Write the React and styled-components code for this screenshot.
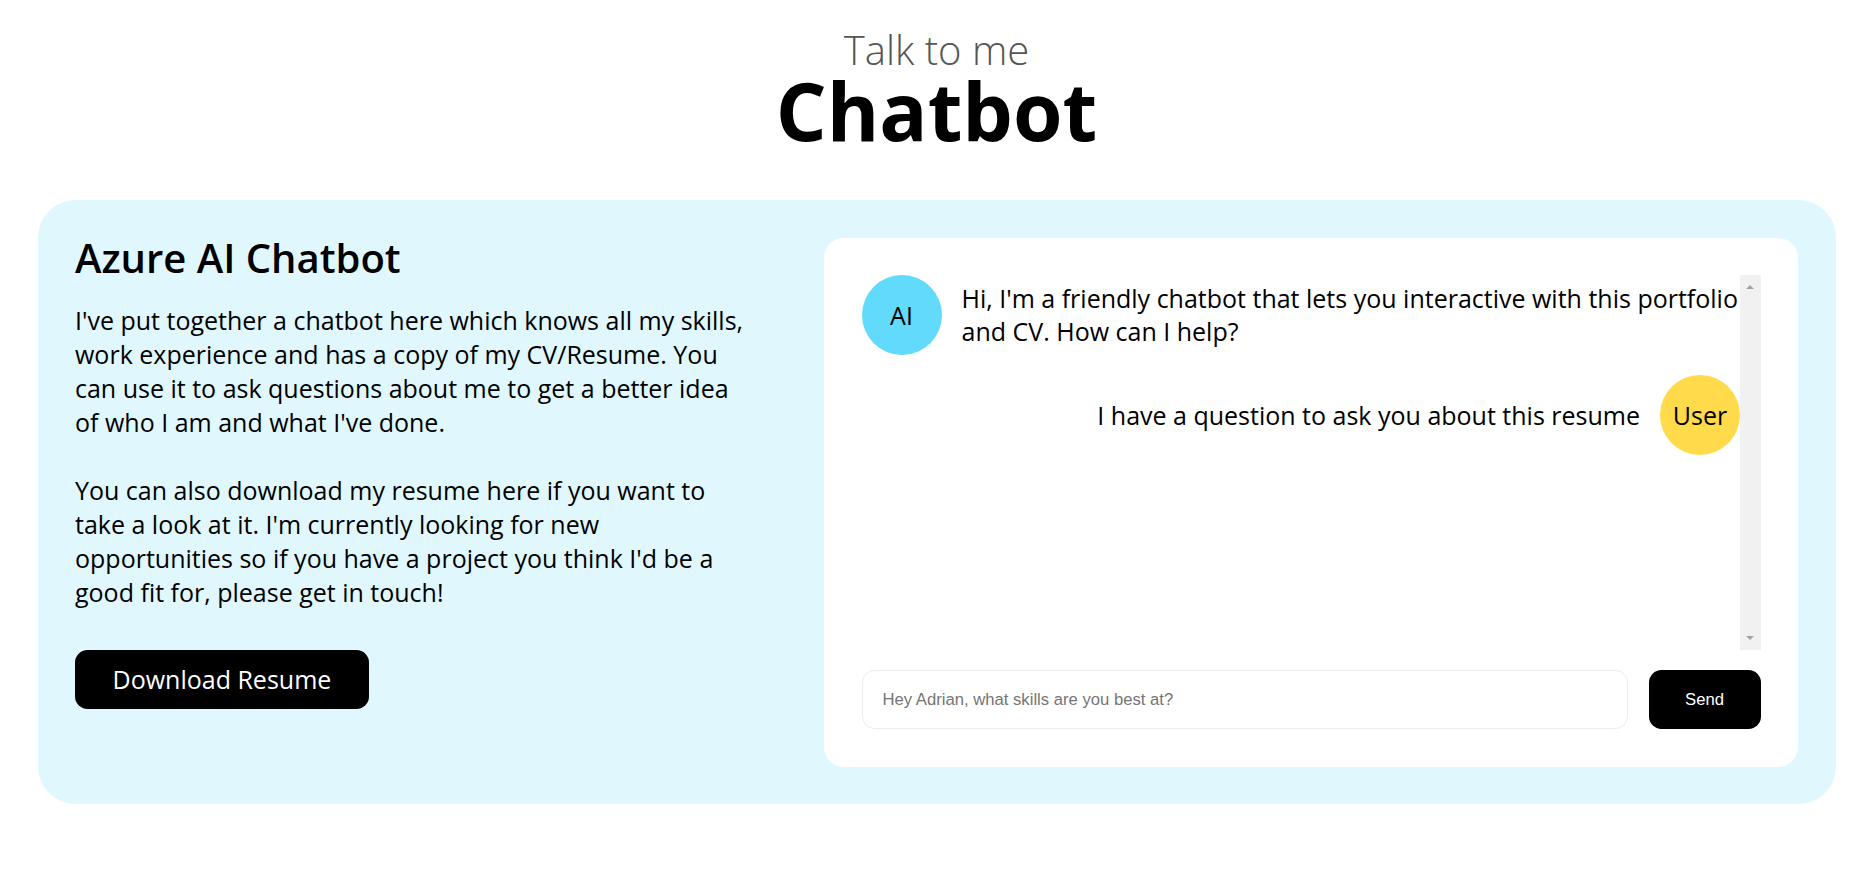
import React from "react";
import styled, { createGlobalStyle } from "styled-components";

const GlobalStyle = createGlobalStyle`
  html, body {
    margin: 0;
    padding: 0;
    background: #ffffff;
    font-family: "Open Sans", "Noto Sans", sans-serif;
    color: #000;
  }
  * { box-sizing: border-box; }
`;

const Page = styled.main`
  padding: 30px 0 60px;
`;

const Header = styled.header`
  display: flex;
  flex-direction: column;
  align-items: center;
  margin-bottom: 50px;
`;

const Eyebrow = styled.h3`
  margin: 0;
  font-size: 40px;
  line-height: 40px;
  font-weight: 300;
  color: #555;
`;

const Title = styled.h1`
  margin: 0;
  font-size: 80px;
  line-height: 80px;
  font-weight: 700;
  color: #000;
`;

const Panel = styled.section`
  display: grid;
  grid-template-columns: 749px 1fr;
  align-items: start;
  margin: 0 37.5px;
  padding: 37.5px;
  background: #e0f7fd;
  border-radius: 37.5px;
`;

const Intro = styled.div`
  display: flex;
  flex-direction: column;
  align-items: flex-start;
  padding-right: 73px;
`;

const IntroTitle = styled.h2`
  margin: 0 0 25.5px;
  font-size: 40px;
  line-height: 40px;
  font-weight: 600;
`;

const IntroText = styled.p`
  margin: 0 0 34px;
  font-size: 25px;
  line-height: 34px;
  &:last-of-type { margin-bottom: 40.5px; }
`;

const PrimaryButton = styled.button`
  height: 59px;
  padding: 0 37.5px;
  border: none;
  border-radius: 12.5px;
  background: #000;
  color: #fff;
  font-family: "Open Sans", sans-serif;
  font-size: 25px;
  cursor: pointer;
`;

const ChatCard = styled.div`
  display: flex;
  flex-direction: column;
  gap: 20px;
  padding: 37.5px;
  background: #fff;
  border-radius: 20px;
`;

const ChatBody = styled.div`
  display: flex;
  height: 375px;
`;

const MessageList = styled.div`
  flex: 1;
  min-width: 0;
  overflow-y: auto;
  display: flex;
  flex-direction: column;
  gap: 20px;
  scrollbar-width: none;
`;

const ScrollRail = styled.div`
  flex: 0 0 20.5px;
  display: flex;
  flex-direction: column;
  align-items: center;
  justify-content: space-between;
  padding: 10px 0;
  background: #f1f1f1;
`;

const RailArrow = styled.span`
  width: 0;
  height: 0;
  border-left: 4.5px solid transparent;
  border-right: 4.5px solid transparent;
  ${(p) =>
    p.$dir === "up"
      ? "border-bottom: 4.5px solid #a3a3a3;"
      : "border-top: 4.5px solid #a3a3a3;"}
`;

const MessageRow = styled.div`
  display: flex;
  align-items: center;
  gap: 20px;
  justify-content: ${(p) => (p.$from === "user" ? "flex-end" : "flex-start")};
`;

const Avatar = styled.div`
  flex: 0 0 80px;
  width: 80px;
  height: 80px;
  border-radius: 50%;
  display: flex;
  align-items: center;
  justify-content: center;
  font-size: 25px;
  background: ${(p) => (p.$tone === "user" ? "#ffda4a" : "#61dafb")};
`;

const MessageText = styled.p`
  margin: 0;
  font-size: 25px;
  line-height: 33px;
`;

const Composer = styled.form`
  display: flex;
  gap: 21px;
  height: 59px;
`;

const ChatInput = styled.input`
  flex: 1;
  height: 100%;
  padding: 0 20px;
  border: 1px solid #ececec;
  border-radius: 12.5px;
  font-family: "Liberation Sans", Arial, sans-serif;
  font-size: 16.67px;
  outline: none;
  &::placeholder { color: #757575; }
`;

const SendButton = styled.button`
  width: 112px;
  height: 100%;
  border: none;
  border-radius: 12.5px;
  background: #000;
  color: #fff;
  font-family: "Liberation Sans", Arial, sans-serif;
  font-size: 16.67px;
  cursor: pointer;
`;

export default function App() {
  return (
    <>
      <GlobalStyle />
      <Page>
        <Header>
          <Eyebrow>Talk to me</Eyebrow>
          <Title>Chatbot</Title>
        </Header>
        <Panel>
          <Intro>
            <IntroTitle>Azure AI Chatbot</IntroTitle>
            <IntroText>
              I've put together a chatbot here which knows all my skills, work
              experience and has a copy of my CV/Resume. You can use it to ask
              questions about me to get a better idea of who I am and what I've
              done.
            </IntroText>
            <IntroText>
              You can also download my resume here if you want to take a look at
              it. I'm currently looking for new opportunities so if you have a
              project you think I'd be a good fit for, please get in touch!
            </IntroText>
            <PrimaryButton type="button">Download Resume</PrimaryButton>
          </Intro>
          <ChatCard>
            <ChatBody>
              <MessageList>
                <MessageRow $from="ai">
                  <Avatar $tone="ai">AI</Avatar>
                  <MessageText>
                    Hi, I'm a friendly chatbot that lets you interactive with this
                    portfolio and CV. How can I help?
                  </MessageText>
                </MessageRow>
                <MessageRow $from="user">
                  <MessageText>I have a question to ask you about this resume</MessageText>
                  <Avatar $tone="user">User</Avatar>
                </MessageRow>
              </MessageList>
              <ScrollRail aria-hidden="true">
                <RailArrow $dir="up" />
                <RailArrow $dir="down" />
              </ScrollRail>
            </ChatBody>
            <Composer onSubmit={(e) => e.preventDefault()}>
              <ChatInput placeholder="Hey Adrian, what skills are you best at?" />
              <SendButton type="submit">Send</SendButton>
            </Composer>
          </ChatCard>
        </Panel>
      </Page>
    </>
  );
}
